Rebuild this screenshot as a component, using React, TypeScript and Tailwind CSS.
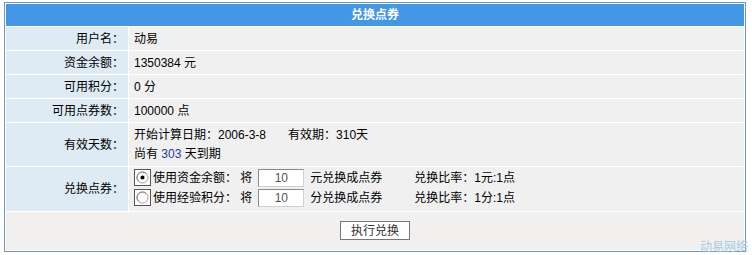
import React from "react";

const font = { fontFamily: '"Liberation Sans", "Noto Sans CJK SC", sans-serif' };

function Label({ children }: { children: React.ReactNode }) {
  return (
    <div className="bg-[#deebf4] flex items-center justify-end pr-[4px]">{children}</div>
  );
}

function Radio({ checked }: { checked?: boolean }) {
  return (
    <span className="inline-flex items-center justify-center w-[17px] h-[17px] border border-[#555] bg-white mr-[2px]">
      <svg width="13" height="13" viewBox="0 0 13 13">
        <circle cx="6.5" cy="6.5" r="5.5" fill="#fff" stroke="#a0a0a0" />
        <path d="M2.6 10.4 A5.5 5.5 0 0 1 10.4 2.6" fill="none" stroke="#808080" strokeWidth="1" />
        {checked && <circle cx="6.5" cy="6.5" r="2" fill="#000" />}
      </svg>
    </span>
  );
}

function NumBox() {
  return (
    <span className="inline-flex items-center justify-center w-[46px] h-[18px] border border-[#8a8a8a] border-r-[#d0d0d0] border-b-[#d0d0d0] bg-white text-[#555] mx-[6px]">
      10
    </span>
  );
}

export default function App() {
  return (
    <div className="w-[752px] h-[255px] bg-white relative text-[12px] text-black" style={font}>
      <div className="absolute left-[4px] top-[2px] w-[742px] h-[250px] border border-[#6d9bbf] bg-white p-px grid grid-cols-[122px_1fr] grid-rows-[22px_23px_23px_23px_23px_43px_44px_1fr] gap-px">
        <div className="col-span-2 bg-[#4497e5] flex items-center justify-center text-white font-bold">
          兑换点券
        </div>
        <Label>用户名：</Label>
        <div className="bg-[#f0f0f0] flex items-center pl-[5px]">动易</div>
        <Label>资金余额：</Label>
        <div className="bg-[#f0f0f0] flex items-center pl-[5px]">1350384 元</div>
        <Label>可用积分：</Label>
        <div className="bg-[#f0f0f0] flex items-center pl-[5px]">0 分</div>
        <Label>可用点券数：</Label>
        <div className="bg-[#f0f0f0] flex items-center pl-[5px]">100000 点</div>
        <Label>有效天数：</Label>
        <div className="bg-[#f0f0f0] flex flex-col justify-center pl-[5px] gap-[1px]">
          <div>
            开始计算日期：2006-3-8<span className="inline-block w-[22px]" />有效期：310天
          </div>
          <div>
            尚有 <span className="text-[#1a3c9c]">303</span> 天到期
          </div>
        </div>
        <Label>兑换点券：</Label>
        <div className="bg-[#f0f0f0] flex flex-col justify-center pl-[5px] gap-[2px] pb-[3px]">
          <div className="flex items-center">
            <Radio checked />
            <span>使用资金余额：&nbsp;将</span>
            <NumBox />
            <span className="w-[104px]">元兑换成点券</span>
            <span>兑换比率：1元:1点</span>
          </div>
          <div className="flex items-center">
            <Radio />
            <span>使用经验积分：&nbsp;将</span>
            <NumBox />
            <span className="w-[104px]">分兑换成点券</span>
            <span>兑换比率：1分:1点</span>
          </div>
        </div>
        <div className="col-span-2 bg-[#f1f0ee] flex items-start justify-center pt-[9px]">
          <button className="w-[70px] h-[19px] border border-[#777] bg-white text-[#333] flex items-center justify-center">
            执行兑换
          </button>
        </div>
      </div>
      <div className="absolute right-[4px] bottom-[-1px] text-[#a8cbe6] text-[12px]">动易网络</div>
    </div>
  );
}
